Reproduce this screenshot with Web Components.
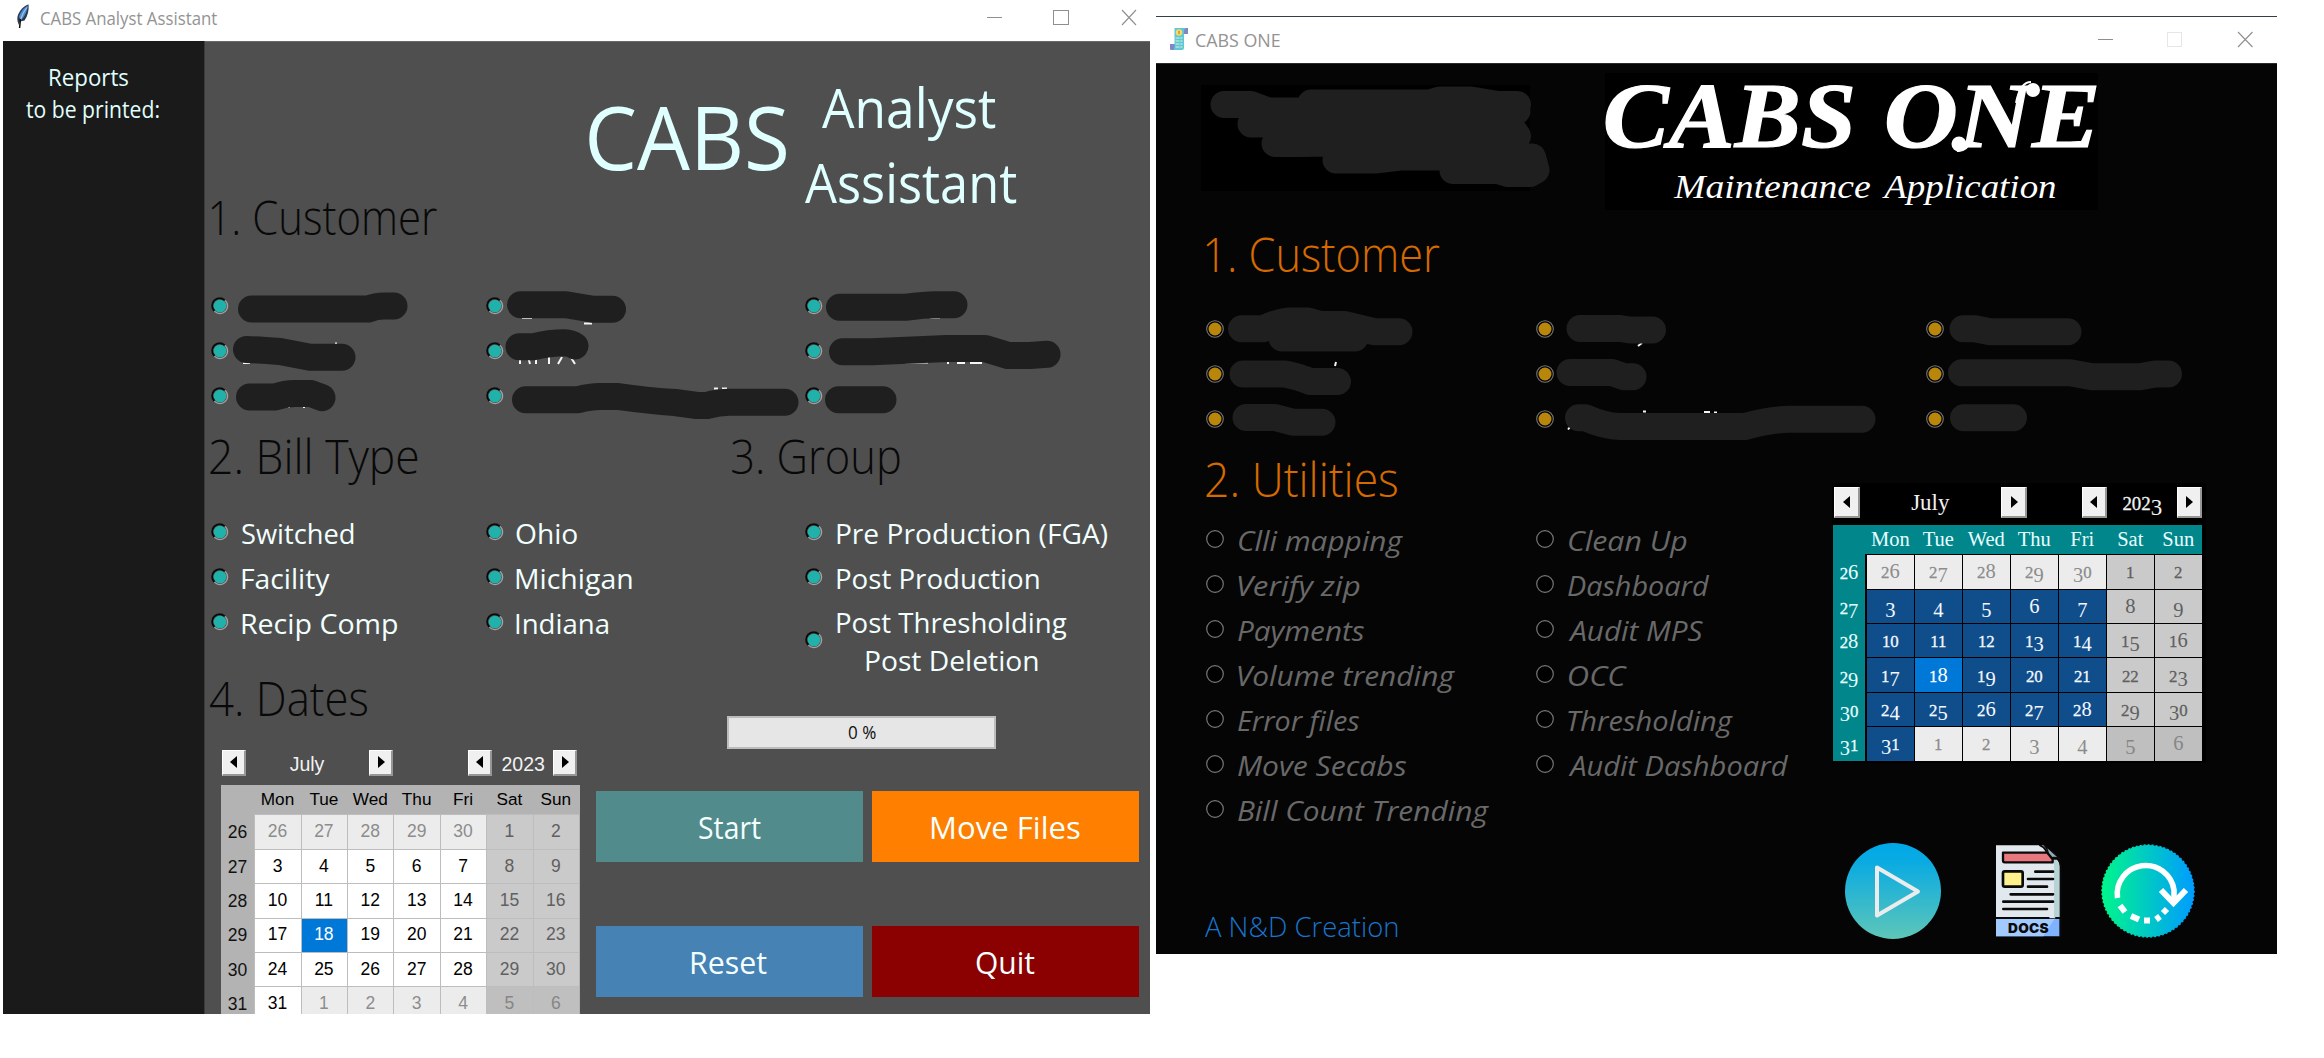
<!DOCTYPE html>
<html lang="en">
<head>
<meta charset="utf-8">
<title>CABS</title>
<style>
html,body{margin:0;background:#fff;height:1058px;overflow:hidden}
body{font-family:"Open Sans","Noto Sans",sans-serif}
</style>
</head>
<body>
<cabs-desktop></cabs-desktop>
<script>
const pen = document.createElement('canvas').getContext('2d');
const define = (name, html, setup) => customElements.define(name, class extends HTMLElement {
  connectedCallback() {
    if (this.shadowRoot) return;
    const root = this.attachShadow({mode: 'open'});
    root.innerHTML = typeof html === 'function' ? html(this) : html;
    if (setup) setup(this, root);
  }
});
const attr = (el, n, d) => el.getAttribute(n) ?? d;

/* One line of text whose ink spans exactly the width w. */
define('fit-text', el => `<style>
  :host{display:block;flex:none;width:${attr(el,'w')}px;height:${attr(el,'s')}px;font-size:${attr(el,'s')}px;line-height:${attr(el,'s')}px;white-space:nowrap}
  span{display:inline-block;transform-origin:0 0;white-space:pre}</style><span>${el.getAttribute('t').replace('&','&amp;')}</span>`,
  (el, root) => {
    const c = getComputedStyle(el);
    pen.font = `${c.fontStyle} ${c.fontWeight} ${c.fontSize} ${c.fontFamily}`;
    const m = pen.measureText(attr(el,'t'));
    const k = attr(el,'w') / (m.actualBoundingBoxLeft + m.actualBoundingBoxRight);
    root.querySelector('span').style.transform = `translateX(${m.actualBoundingBoxLeft * k}px) scaleX(${k})`;
  });

define('radio-dot', el => {
  const k = attr(el, 'kind', 'teal');
  const art = {
    teal: `<circle cx="9" cy="9" r="7.6" fill="none" stroke="#a3a3a3" stroke-width="1.4"/><path d="M3.4 14A7.4 7.4 0 0 1 13.8 3.400" fill="none" stroke="#0a0a0a" stroke-width="2"/><circle cx="9" cy="9" r="6.3" fill="#20b2aa"/>`,
    gold: `<circle cx="9" cy="9" r="8.3" fill="#000" stroke="#777" stroke-width="1.1"/><circle cx="9" cy="9" r="6.5" fill="#b8860b"/>`,
    off: `<circle cx="9" cy="9" r="8.3" fill="#000" stroke="#777" stroke-width="1.2"/>`
  }[k];
  return `<style>:host{display:block;flex:none;width:18px;height:18px}svg{display:block}</style><svg width="18" height="18">${art}</svg>`;
});

define('radio-option', el => `<style>
  :host{display:flex;align-items:center;height:45px;gap:${attr(el,'gap','13')}px}
  fit-text{margin-top:4px}</style>
  <radio-dot kind="${attr(el,'kind','teal')}"></radio-dot>${el.hasAttribute('t') ? `<fit-text s="27" w="${attr(el,'w')}" t="${attr(el,'t')}"></fit-text>` : ''}`);

define('window-bar', el => `<style>
  :host{display:flex;flex:none;height:${attr(el,'h')}px;background:#fff;color:#939393;box-sizing:border-box}
  ::slotted(svg){flex:none}
  .c{margin-left:auto;display:block}</style>
  <slot></slot><svg class="c" width="${attr(el,'cw')}" height="${attr(el,'h')}" shape-rendering="crispEdges" fill="none" stroke="#8f8f8f">
  <path d="${attr(el,'min')}"/><path d="${attr(el,'max')}" stroke="${attr(el,'maxc','#8f8f8f')}"/><path shape-rendering="auto" stroke-width="1.1" d="${attr(el,'close')}"/></svg>`);

define('step-button', el => `<style>
  :host{display:flex;flex:none;box-sizing:border-box;align-items:center;justify-content:center;background:#f0f0f0;width:${attr(el,'w')}px;height:${attr(el,'h')}px;border:1px solid #fff;border-right:2px solid #969696;border-bottom:2px solid #969696}
  svg{display:block}</style><svg width="8" height="12">${attr(el,'dir')==='l' ? '<path d="M7 0V12L0 6Z"/>' : '<path d="M1 0V12L8 6Z"/>'}</svg>`);

define('task-button', el => `<style>
  :host{display:flex;align-items:center;justify-content:center;background:${attr(el,'bg')};color:#f4ffff}
  fit-text{margin-top:2px}</style><fit-text s="31" w="${attr(el,'w')}" t="${attr(el,'t')}"></fit-text>`);

/* Month grid with week numbers; dark variant sets figures in old style. */
define('month-calendar', el => {
  const dark = el.hasAttribute('dark');
  const figs = n => !dark ? n : '<u>' + String(n).replace(/[012]+|[34579]+/g, d => /[012]/.test(d) ? `<i class="x">${d}</i>` : `<i class="d">${d}</i>`) + '</u>';
  const nums = [26,27,28,29,30]; for (let i = 1; i < 32; i++) nums.push(i); nums.push(1,2,3,4,5,6);
  let rows = '';
  for (let r = 0; r < 6; r++) {
    rows += `<span class="wk">${figs(26 + r)}</span>`;
    for (let c = 0; c < 7; c++) {
      const i = r * 7 + c, out = i < 5 || i > 35, we = c > 4;
      rows += `<span class="day ${out ? 'out' : ''} ${we ? 'we' : ''} ${i === 22 ? 'sel' : ''}">${figs(nums[i])}</span>`;
    }
  }
  const sz = dark ? 'w="25.5" h="30.5"' : 'w="24" h="26"';
  const g = dark ? [50, 41, 50.5, 55, 12.5, 45, 12] : [43.5, 35, 44.5, 75, 9.5, 42, 9.5];
  return `<style>
  :host{display:block;${dark ? 'width:371px;padding:4.3px 1.5px 2px 1px;background:#000;font-family:"Liberation Serif",serif' : 'width:359px;font-family:"Liberation Sans",sans-serif'}}
  .nav{display:flex;align-items:flex-start;color:#f2f2f2;padding-left:${dark ? 1.3 : 1}px;height:${dark ? 37.7 : 35}px}
  .nav b{font-weight:400;white-space:nowrap;text-align:center;font-size:${dark ? 23 : 19.5}px;line-height:${dark ? 32 : 28}px}
  .grid{display:grid;background:${dark ? '#000' : '#b3b3b3'};
    grid-template-columns:${dark ? '33.3px repeat(7,48px)' : '33.3px repeat(7,46.4px)'};
    grid-template-rows:${dark ? 29.3 : 29.5}px repeat(6,34.4px)}
  .grid span{display:flex;align-items:center;justify-content:center;font-size:${dark ? 20.5 : 17.5}px}
  .grid .hd{background:${dark ? '#00868b' : '#b3b3b3'};color:${dark ? '#e8ffff' : '#000'};font-size:${dark ? 20.5 : 17.2}px}
  .grid .wk{background:${dark ? '#00868b' : '#b3b3b3'};color:${dark ? '#e8ffff' : '#111'};justify-content:flex-end;padding:2px 7px 0 0;${dark ? 'margin-right:1px' : ''}}
  .grid .day{background:${dark ? '#104e8b' : '#fff'};color:${dark ? '#f4f8ff' : '#000'};box-shadow:inset 1px 1px 0 ${dark ? '#000' : '#bdbdbd'};}
  .grid .out{background:#ececec;color:#8c8c8c}
  .grid .out.we{background:#bfbfbf;color:#868686}
  .grid .we:not(.out){background:#cacaca;color:#606060}
  .grid .sel{background:#0078d7;color:#fff}
  u{display:block;text-decoration:none;line-height:28px}
  b u{line-height:inherit}
  i{font-style:normal;line-height:0}
  .x{font-size:.82em;-webkit-text-stroke:.3px currentColor}
  .d{position:relative;top:.2em}
  </style>
  <div class="nav"><step-button dir="l" ${sz}></step-button>
   <b style="margin-left:${g[0]}px;width:${g[1]}px">July</b>
   <step-button style="margin-left:${g[2]}px" dir="r" ${sz}></step-button>
   <step-button style="margin-left:${g[3]}px" dir="l" ${sz}></step-button>
   <b style="margin-left:${g[4]}px;width:${g[5]}px">${figs('2023')}</b>
   <step-button style="margin-left:${g[6]}px" dir="r" ${sz}></step-button></div>
  <div class="grid"><span class="hd"></span>${'Mon Tue Wed Thu Fri Sat Sun'.split(' ').map(d => `<span class="hd">${d}</span>`).join('')}${rows}</div>`;
});

/* Marker strokes laid over a window body, in desktop coordinates. */
define('marker-layer', el => `<style>:host{position:absolute;left:0;top:0;pointer-events:none}svg{display:block}</style>
  <svg width="${attr(el,'vw')}" height="${attr(el,'vh')}" viewBox="${attr(el,'at')} ${attr(el,'vw')} ${attr(el,'vh')}" fill="none">
  <path d="${attr(el,'bits','')}" stroke="#f2f6f6" stroke-width="2"/>
  <path d="${attr(el,'marks')}" stroke="#1f1f1f" stroke-width="27" stroke-linecap="round" stroke-linejoin="round"/>
  <path d="${attr(el,'area','')}" fill="#1f1f1f"/></svg>`);

define('feather-icon', `<style>:host{display:block;flex:none;width:15px;height:26px}svg{display:block}</style>
  <svg width="15" height="26"><path d="M12.6.4C8 1.400 3 7 1.500 12.500C.8 16 2 19 3.200 21.500L4 17.500L8.500 16.500C12 11.500 13 6 12.600.4Z" fill="#2b3a4d"/><path d="M11.800 1.500C8 3.500 4 8.500 3 13L5 16.300C8.500 12.500 11.400 7 11.800 1.500Z" fill="#4f8fd6"/><path d="M11 3.500C8 7 5 12.500 4 19" stroke="#b9d8f5" stroke-width=".9" fill="none"/><path d="M4.500 15L3.600 24" stroke="#111" stroke-width="1.500"/></svg>`);

define('bill-icon', `<style>:host{display:block;flex:none;width:18px;height:24px}svg{display:block}</style>
  <svg width="18" height="24"><path d="M14 1h4v6h-4zM0 17h5v6H1q-1 0-1-1z" fill="#8186c9"/><path d="M4.500 1H16q-2 1-2 3V21q0 2-2 2H3q1.500-.5 1.500-2.500V3q0-2 0-2z" fill="#5ec9d4"/><circle cx="9" cy="5.500" r="3.200" fill="#ffd763"/><path d="M9 3.800v3.400" stroke="#9a7a30"/><path d="M5.500 11h7M5.500 14h7M5.500 17h7M5.500 20h7" stroke="#dff0d8" stroke-width="1.200" stroke-dasharray="4 .8"/></svg>`);

define('play-icon', `<style>:host{display:block;flex:none;width:96px;height:96px}svg{display:block}</style>
  <svg width="96" height="96"><defs><linearGradient id="g" x2="0" y2="1"><stop stop-color="#00a8e8"/><stop offset=".2" stop-color="#0aabe2"/><stop offset="1" stop-color="#5ec6b8"/></linearGradient></defs><circle cx="48" cy="48" r="48" fill="url(#g)"/><path d="M32 24.500L73 48.500L32 72.500Z" fill="none" stroke="#ececec" stroke-width="4" stroke-linejoin="round"/></svg>`);

define('docs-icon', `<style>:host{display:block;flex:none;width:70px;height:96px}svg{display:block}</style>
  <svg width="70" height="96" viewBox="555 1119 210 288" stroke-linecap="round">
  <path d="M558 1126H700L748 1176V1345H558Z" fill="#e1e8ee"/><path d="M732 1160L750 1186V1345H732Z" fill="#b7d3d5"/>
  <path d="M690 1126Q702 1130 708 1142L716 1166L742 1166Q752 1176 752 1192V1345" fill="none" stroke="#0a0a0a" stroke-width="6"/>
  <path d="M700 1121L750 1166Q732 1158 716 1166Q718 1140 700 1121Z" fill="#93a9b5" stroke="#0a0a0a" stroke-width="4"/>
  <path d="M579 1148H712L728 1168V1177H584Q579 1177 579 1171Z" fill="#e8787f" stroke="#0a0a0a" stroke-width="7" stroke-linejoin="round"/>
  <rect x="579" y="1204" width="59" height="46" rx="5" fill="#fff18c" stroke="#0a0a0a" stroke-width="8"/>
  <path d="M676 1205H729M654 1227H729M654 1250H711M602 1273H729M580 1295H729M580 1317H711" stroke="#0a0a0a" stroke-width="8"/>
  <path d="M558 1347H751V1399H558Z" fill="#7fb2ff"/><path d="M558 1347H733L700 1399H558Z" fill="#a3caff"/>
  <path d="M556 1344H716M738 1344H751V1399" fill="none" stroke="#0a0a0a" stroke-width="6"/>
  <text x="594" y="1388" font-family="Inter,sans-serif" font-weight="900" font-size="41" textLength="122" lengthAdjust="spacing" fill="#0a0a0a">DOCS</text></svg>`);

define('rerun-icon', `<style>:host{display:block;flex:none;width:94px;height:94px}svg{display:block}</style>
  <svg width="94" height="94" fill="none" stroke="#fff" stroke-width="6"><defs><linearGradient id="g"><stop stop-color="#00f58c"/><stop offset="1" stop-color="#009cff"/></linearGradient></defs>
  <circle cx="47" cy="47" r="46" fill="url(#g)" stroke="url(#g)" stroke-width="1.500" stroke-dasharray="2 2"/>
  <path d="M16.500 54A28.500 28.500 0 1 1 73 46V58" stroke-width="5.500"/><path d="M60 46L72.500 59L85 46"/>
  <path d="M19 61.500L24 68M30 72L38 75.500M43 76.500H49M55 75.500L59 72.500M62 69L66 65"/></svg>`);

define('cabs-one-logo', `<style>
  :host{display:block;position:relative;width:493px;height:136.400px;background:#000;color:#fff;font-family:"Liberation Serif",serif}
  .a{display:flex;font-weight:700;font-style:italic;padding:0 0 0 1px;-webkit-text-stroke:1.200px #fff}
  .b{display:flex;font-style:italic;gap:12px;padding:8.500px 0 0 68px}
  svg{position:absolute;left:0;top:0}</style>
  <div class="a"><fit-text s="93" w="246" t="CABS" style="margin-top:-4px"></fit-text><fit-text s="93" w="209" t="ONE" style="margin:-4px 0 0 35px"></fit-text></div>
  <div class="b"><fit-text s="33" w="197" t="Maintenance"></fit-text><fit-text s="33" w="174" t="Application"></fit-text></div>
  <svg width="493" height="136" fill="#fff"><circle cx="428" cy="17" r="7"/><path d="M411 30Q415 9 426 9" fill="none" stroke="#fff" stroke-width="2"/><circle cx="354" cy="71" r="7.500"/><path d="M352 78Q362 79 367 66" fill="none" stroke="#fff" stroke-width="2"/></svg>`);

const dots = kind => `<radio-option kind="${kind}"></radio-option>`.repeat(3);
const opts = (kind, gap, list) => list.map(([t,w]) => `<radio-option kind="${kind}" gap="${gap}" t="${t}" w="${w}"></radio-option>`).join('');

define('analyst-window', `<style>
  :host{display:flex;flex-direction:column;width:1147px;height:1014px;flex:none}
  .body{position:relative;display:flex;height:973px;overflow:hidden;background:#4f4f4f;box-shadow:inset 0 1px #6a6a6a}
  .side{width:201px;flex:none;background:#1a1a1a;border-right:1px solid #3a3a3a;color:#e0ffff;padding-top:25px;box-sizing:content-box}
  .side fit-text{margin-left:47px}.side fit-text+fit-text{margin:8.500px 0 0 22.500px}
  .main{width:945px;display:flex;flex-direction:column}
  .main>*{flex:none;box-sizing:border-box}
  .hero{display:flex;height:224px;color:#e0ffff;align-items:flex-start}
  .h{font-weight:300;color:#080808}
  .cols{display:grid;grid-template-columns:275px 319px 1fr;padding-left:5.700px;color:#f2ffff}
  .two{display:flex;align-items:center;height:82px;gap:14px}
  .low{display:flex}
  .act{padding:52px 0 0 11px}
  .bar{display:flex;align-items:center;justify-content:center;box-sizing:border-box;width:269px;height:33px;margin-left:131px;background:#e6e6e6;border:2px solid #bcbcbc;color:#111}
  .btns{display:grid;grid-template:70.500px 70.500px / 267px 267px;gap:64.500px 9px;margin-top:42px}
  </style>
  <window-bar h="41" cw="180" min="M17 17.500H32" max="M83.500 10.500H98.500V24.500H83.500Z" close="M152 10L166 25M166 10L152 25">
    <feather-icon style="margin:4px 0 0 13px"></feather-icon><fit-text s="17.500" w="176" t="CABS Analyst Assistant" style="margin:9.500px 0 0 9.500px"></fit-text></window-bar>
  <div class="body">
    <div class="side"><fit-text s="23" w="78" t="Reports"></fit-text><fit-text s="23" w="133" t="to be printed:"></fit-text></div>
    <div class="main">
      <div class="hero"><fit-text class="h" s="47" w="226" t="1. Customer" style="margin:153px 0 0 5.500px"></fit-text>
        <fit-text s="87" w="197.500" t="CABS" style="margin:52px 0 0 152.500px"></fit-text>
        <div style="margin:39px 0 0 18.500px"><fit-text s="54" w="174" t="Analyst" style="margin-left:17px"></fit-text><fit-text s="54" w="212" t="Assistant" style="margin-top:21px"></fit-text></div></div>
      <div class="cols" style="padding-top:18.800px"><div>${dots('teal')}</div><div>${dots('teal')}</div><div>${dots('teal')}</div></div>
      <div style="display:flex;height:90.400px;padding-top:14.500px"><fit-text class="h" s="47" w="208" t="2. Bill Type" style="margin-left:5px"></fit-text><fit-text class="h" s="47" w="168" t="3. Group" style="margin-left:314px"></fit-text></div>
      <div class="cols" style="height:155px">
        <div>${opts('teal',13.5,[['Switched',112],['Facility',88],['Recip Comp',156]])}</div>
        <div>${opts('teal',12.5,[['Ohio',61],['Michigan',116],['Indiana',92]])}</div>
        <div>${opts('teal',14,[['Pre Production (FGA)',270],['Post Production',202]])}
          <div class="two"><radio-dot></radio-dot><div><fit-text s="27" w="230" t="Post Thresholding" style="margin-top:3px"></fit-text><fit-text s="27" w="172" t="Post Deletion" style="margin:10.500px 0 0 29px"></fit-text></div></div></div></div>
      <div class="low"><div style="width:380px"><fit-text class="h" s="47" w="157" t="4. Dates" style="margin:10.400px 0 0 5px"></fit-text>
        <month-calendar style="margin:28.400px 0 0 16px"></month-calendar></div>
        <div class="act"><div class="bar"><fit-text s="18.500" w="28" t="0 %"></fit-text></div>
          <div class="btns"><task-button bg="#528b8b" t="Start" w="62"></task-button><task-button bg="#ff8000" t="Move Files" w="148"></task-button><task-button bg="#4682b4" t="Reset" w="75"></task-button><task-button bg="#8b0000" t="Quit" w="59"></task-button></div></div></div>
    </div>
    <marker-layer at="3 41" vw="1147" vh="973" bits="M520 357V364M528 357L530 364M536 356V364M549 356V364M558 364L562 357M570 356L575 364M584 323.500H592M522 318H532M714 388.500H718M722 388.500H727M930 317.500H940M880 363H895M905 362.500H928M948 358V364M957 363H965M970 363H982M336 342.500V345M243 363H250M289 408V406M304 408V406"
     marks="M251.500 309H368Q376 306 384 306H394M246.500 349.500Q260 350 280 351.500L310 357.300H342M249.500 397H275Q285 393.500 295 393.500H311L322 397.700M520.500 304.700H566Q580 307 593 309.300H612.500M519 346.800H533Q550 342.700 564 342.700Q571 343 575 346M525.500 399.700H578Q590 396.500 600 396.500H618Q650 401 675 402.500L697 405.500H707Q718 402.300 730 402.300H785M839.500 307.300H905Q925 304.700 935 304.700H954M842.500 351.700H872L947 348.500H985L1008 355.500H1030L1047 354.300M838.500 399.700H883"></marker-layer>
  </div>`);

define('one-window', `<style>
  :host{display:flex;flex-direction:column;width:1121px;height:938px;margin:16px 0 0 6px;flex:none;box-sizing:border-box}
  window-bar{border-top:1px solid #333f47}
  .body{position:relative;height:891px;overflow:hidden;background:#050505;box-shadow:inset 0 1px #2b2b2b}
  .head{display:flex;align-items:flex-start;height:168.200px}
  .ph{width:329.500px;height:105.700px;background:#000;margin:22px 0 0 44.500px}
  .h{font-weight:300;color:#d56a00;margin-left:50.300px}
  .cols{display:grid;padding-left:50px;grid-template-columns:330px 390px 1fr}
  .u{color:#696969;font-style:italic}
  .low{display:flex}
  .icons{display:flex;align-items:center;margin:80px 0 0 12.500px}
  </style>
  <window-bar h="47" cw="200" min="M21 22.500H36" max="M90.500 15.500H104.500V29.500H90.500Z" maxc="#e6e6e6" close="M161 15L175.500 30M175.500 15L161 30">
    <bill-icon style="margin:10px 0 0 14px"></bill-icon><fit-text s="17.500" w="84" t="CABS ONE" style="margin:14.500px 0 0 8px"></fit-text></window-bar>
  <div class="body">
    <div class="head"><div class="ph"></div><cabs-one-logo style="margin:10.300px 0 0 75px"></cabs-one-logo></div>
    <fit-text class="h" s="47" w="233.500" t="1. Customer"></fit-text>
    <div class="cols" style="padding-top:28.200px"><div>${dots('gold')}</div><div>${dots('gold')}</div><div>${dots('gold')}</div></div>
    <div class="low"><div style="width:676px;padding-top:14.600px"><fit-text class="h" s="47" w="191" t="2. Utilities"></fit-text>
      <div class="cols u" style="padding-top:13.300px">
        <div>${opts('off',14,[['Clli mapping',165],['Verify zip',122],['Payments',127],['Volume trending',217],['Error files',122],['Move Secabs',169],['Bill Count Trending',251]])}</div>
        <div>${opts('off',14,[['Clean Up',119],['Dashboard',142],['Audit MPS',135],['OCC',60],['Thresholding',165],['Audit Dashboard',221]])}</div></div>
      <fit-text s="27" w="192.500" t="A N&amp;D Creation" style="font-weight:300;color:#1874cd;margin:82px 0 0 49px"></fit-text></div>
      <div><month-calendar dark style="margin-top:41.500px"></month-calendar>
        <div class="icons"><play-icon></play-icon><docs-icon style="margin-left:54px"></docs-icon><rerun-icon style="margin-left:36px"></rerun-icon></div></div></div>
    <marker-layer at="1156 63" vw="1121" vh="891" bits="M1638 346L1642 343M1643 411.500H1646M1704 412H1710M1714 412.500H1717M1568 429.500L1570 427M1335 366L1336 362M1300 366H1303"
     marks="M1224 104.500H1251L1268 111H1517M1311 103H1430L1440 100H1471L1498 104.500H1517.500M1251 124H1509L1517.500 136M1275 143.500H1300L1330 143M1336 160H1375L1400 157H1532.500L1536 170M1453 170.500H1498L1508 173.500H1530L1536 170M1241.500 328.700H1263Q1280 321 1291 321H1308L1320 324.500H1345L1374 331.700H1399M1282 338H1355M1243 374H1285Q1300 377 1310 381.500H1337.500M1246 417.500H1275L1293 422.300H1322M1580 328.500H1620L1630 330H1652.500M1570 372.500H1612L1624 376.700H1633M1578.500 417.700H1585Q1605 426.500 1620 426.500H1745Q1770 419.300 1790 419.300H1862M1963 328.700H1975L1990 331.700H2068M1961.500 372.700H2070L2092 376.800H2140L2155 374H2168.500M1963.500 417.700H2013.500"
     area="M1250 105H1515V136L1530 158V172H1460L1340 160L1275 143Z"></marker-layer>
  </div>`);

define('cabs-desktop', `<style>:host{display:flex;align-items:flex-start;width:2324px;height:1058px;background:#fff;padding-left:3px;box-sizing:border-box;overflow:hidden}</style>
  <analyst-window></analyst-window><one-window></one-window>`);
</script>
</body>
</html>
